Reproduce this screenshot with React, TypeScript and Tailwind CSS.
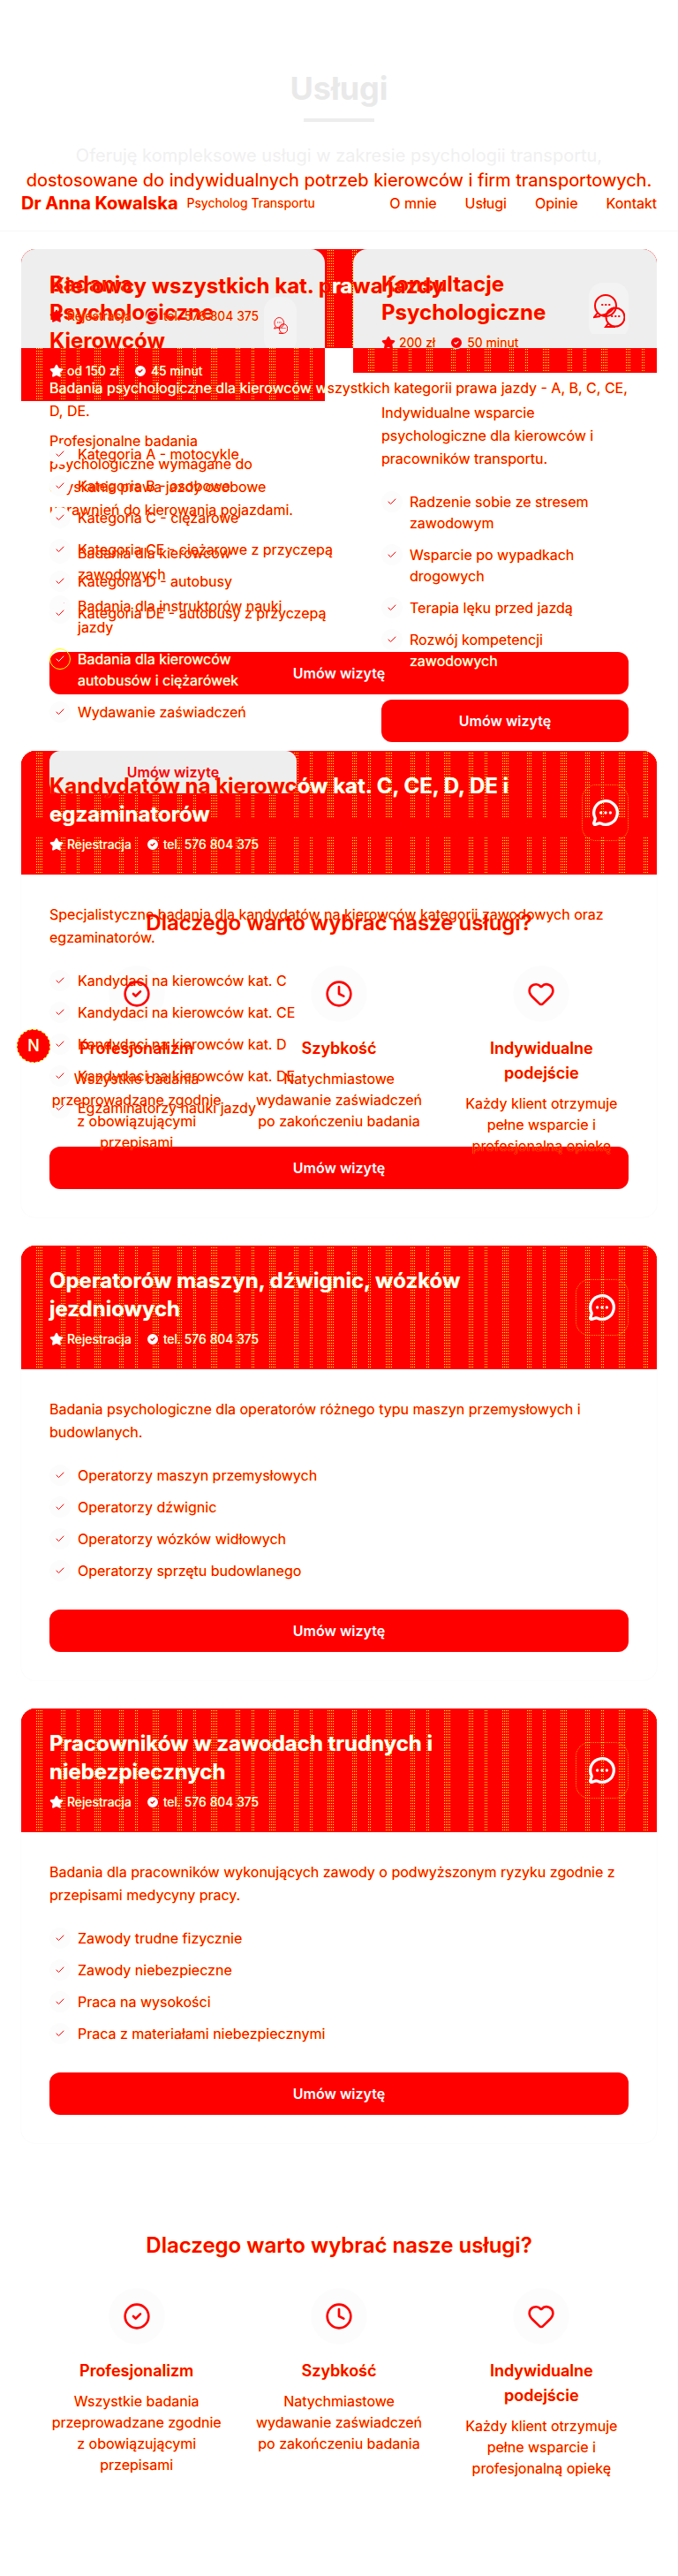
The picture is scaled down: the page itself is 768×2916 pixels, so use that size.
import React from 'react';
import { Check, CircleCheck, Clock, Heart, MessageCircleMore, Star } from 'lucide-react';

// dithered red header texture
const dither =
  'bg-[#ff0000] [background-image:repeating-linear-gradient(90deg,#ff0000_0_16px,transparent_16px_24px,#ff0000_24px_44px,transparent_44px_50px,#ff0000_50px_62px,transparent_62px_66px),repeating-linear-gradient(0deg,#ff0000_0_2px,transparent_2px_3px),repeating-linear-gradient(90deg,#ff0000_0_1px,#ffff00_1px_2px)]';

type Item = { t: React.ReactNode; on?: boolean };

function TwoBubbles({ className }: { className: string }) {
  return (
    <svg viewBox="0 0 36 38" preserveAspectRatio="none" fill="none" stroke="#ff0000" strokeWidth="2" className={className}>
      <circle cx="14" cy="13" r="12" />
      <path d="M5 21L1 26l7-1" />
      <path d="M8 24c6 0 11-3 16-9" />
      <circle cx="25" cy="26" r="10.5" />
      <path d="M17 33l-3 4h11" />
      <path d="M10 12h.5M14 12h.5M18 12h.5M21 25h.5M25 25h.5M29 25h.5" strokeLinecap="round" />
    </svg>
  );
}

function Meta({ a, b, tone }: { a: string; b: string; tone: 'white' | 'red' }) {
  const star = tone === 'white' ? 'w-4 h-4 fill-white text-white' : 'w-4 h-4 fill-[#ff0000] text-[#ff0000]';
  const tick = tone === 'white' ? 'w-4 h-4 fill-white text-[#ff0000]' : 'w-4 h-4 fill-[#ff0000] text-[#eeeeee]';
  return (
    <div className={`flex items-center gap-4 mt-2 h-5 text-sm ${tone === 'white' ? 'text-white' : 'text-[#ff0000]'}`}>
      <span className="flex items-center gap-1">
        <Star className={star} />
        {a}
      </span>
      <span className="flex items-center gap-1">
        <CircleCheck className={tick} />
        {b}
      </span>
    </div>
  );
}

function Bullets({ items }: { items: Item[] }) {
  return (
    <ul className="flex flex-col gap-3 mb-8">
      {items.map((item, i) => (
        <li key={i} className={`flex items-start gap-2 leading-6 ${item.on ? 'text-white' : 'text-[#ff0000]'}`}>
          <span
            className={`w-6 h-6 shrink-0 rounded-full flex items-center justify-center ${
              item.on ? 'border border-[#ffff00]' : 'bg-[#fcfcfc]'
            }`}
          >
            <Check size={12} className={item.on ? 'text-white' : 'text-[#ff0000]'} />
          </span>
          <span>{item.t}</span>
        </li>
      ))}
    </ul>
  );
}

function Button({ grey }: { grey?: boolean }) {
  return (
    <button
      className={`w-full h-12 rounded-xl font-semibold ${grey ? 'bg-[#eeeeee] text-[#ff0000]' : 'bg-[#ff0000] text-white'}`}
    >
      Umów wizytę
    </button>
  );
}

// regular full width card with the red header
function ServiceCard({
  title,
  desc,
  items,
  boxWidth,
  band,
}: {
  title: React.ReactNode;
  desc: string;
  items: Item[];
  boxWidth: string;
  band?: boolean;
}) {
  return (
    <div className="rounded-2xl overflow-hidden bg-white shadow-[0_0_2px_#f4f4f4]">
      <div className={`relative flex items-center justify-between gap-2 px-8 py-6 ${dither}`}>
        {band && <div className="absolute inset-x-0 top-[76px] h-[20px] bg-[#ff0000]" />}
        <div className="relative z-10 flex-1">
          <h3 className="text-2xl leading-8 font-bold text-white">{title}</h3>
          <Meta a="Rejestracja" b="tel. 576 804 375" tone="white" />
        </div>
        <div className={`relative h-16 shrink-0 flex items-center justify-center rounded-2xl border border-dotted border-[#ffff00]/60 ${boxWidth}`}>
          <MessageCircleMore size={32} strokeWidth={2.5} className="text-white" />
        </div>
      </div>
      <div className="p-8">
        <p className="leading-[26px] mb-6 text-[#ff0000]">{desc}</p>
        <Bullets items={items} />
        <Button />
      </div>
    </div>
  );
}

// half width cards lying over the first card
function OverlayCard({
  title,
  meta,
  metaTone,
  desc,
  items,
  icon,
  boxWidth,
  grey,
}: {
  title: React.ReactNode;
  meta: [string, string];
  metaTone: 'white' | 'red';
  desc: string;
  items: Item[];
  icon: React.ReactNode;
  boxWidth: string;
  grey?: boolean;
}) {
  return (
    <div className="min-w-0">
      <div className={`relative flex items-center justify-between gap-2 px-8 py-6 rounded-t-2xl overflow-hidden ${dither}`}>
        <div className="absolute inset-x-0 top-0 h-[112px] bg-[#eeeeee]" />
        <div className="relative flex-1 min-w-0">
          <h3 className="text-2xl leading-8 font-bold text-[#ff0000]">{title}</h3>
          <Meta a={meta[0]} b={meta[1]} tone={metaTone} />
        </div>
        <div className={`relative h-16 shrink-0 flex items-center justify-center rounded-2xl bg-[linear-gradient(#f3f3f3_58px,transparent_58px)] ${boxWidth}`}>
          {icon}
        </div>
      </div>
      <div className="p-8">
        <p className="leading-[26px] mb-6 text-[#ff0000]">{desc}</p>
        <Bullets items={items} />
        <Button grey={grey} />
      </div>
    </div>
  );
}

function WhySection({ className }: { className: string }) {
  const cols = [
    { icon: <CircleCheck size={32} />, title: 'Profesjonalizm', text: 'Wszystkie badania przeprowadzane zgodnie z obowiązującymi przepisami' },
    { icon: <Clock size={32} />, title: 'Szybkość', text: 'Natychmiastowe wydawanie zaświadczeń po zakończeniu badania' },
    { icon: <Heart size={32} />, title: 'Indywidualne podejście', text: 'Każdy klient otrzymuje pełne wsparcie i profesjonalną opiekę' },
  ];
  return (
    <section className={`px-14 text-[#ff0000] text-center ${className}`}>
      <h2 className="text-2xl leading-9 font-semibold mb-[30px]">Dlaczego warto wybrać nasze usługi?</h2>
      <div className="grid grid-cols-3 gap-8">
        {cols.map((c) => (
          <div key={c.title}>
            <div className="w-16 h-16 mx-auto mb-4 rounded-full bg-black/[0.012] flex items-center justify-center">{c.icon}</div>
            <h4 className="text-lg leading-7 font-semibold mb-2">{c.title}</h4>
            <p className="leading-6">{c.text}</p>
          </div>
        ))}
      </div>
    </section>
  );
}

export default function App() {
  return (
    <div className="relative w-[768px] h-[2916px] overflow-hidden bg-white font-['Inter',sans-serif] [text-shadow:0_0_0.8px_#ffff00]">
      {/* Intro */}
      <div className="pt-20 mb-16 text-center">
        <h2 className="text-4xl leading-10 font-bold text-[#e9e9e9] mb-3.5 [text-shadow:none]">Usługi</h2>
        <div className="w-20 h-1 mx-auto mb-6 bg-[#ededed]" />
        <p className="text-xl leading-7 text-[#ff0000]">
          <span className="text-[#f0f0f0] [text-shadow:none]">Oferuję kompleksowe usługi w zakresie psychologii transportu,</span>
          <br />
          dostosowane do indywidualnych potrzeb kierowców i firm transportowych.
        </p>
      </div>

      {/* Header lying over the content */}
      <header className="absolute top-[198px] inset-x-0 h-16 px-6 flex items-center justify-between border-b border-[#f7f7f7] text-[#ff0000]">
        <div className="flex items-center gap-2.5">
          <span className="text-xl font-bold">Dr Anna Kowalska</span>
          <span className="text-sm">Psycholog Transportu</span>
        </div>
        <nav className="flex items-center gap-8">
          <span>O mnie</span>
          <span>Usługi</span>
          <span>Opinie</span>
          <span>Kontakt</span>
        </nav>
      </header>

      <div className="px-6 flex flex-col gap-8">
        {/* First card with the two half width cards on top of it */}
        <div className="relative">
          <div className="rounded-2xl bg-white">
            <div className={`h-[112px] rounded-t-2xl px-8 flex flex-col justify-center ${dither}`}>
              <div className="relative z-10">
                <h3 className="text-2xl leading-8 font-bold text-[#ff0000] whitespace-nowrap">
                  Kierowcy wszystkich kat. p<span className="text-white">ra</span>wa jazdy
                </h3>
                <Meta a="Rejestracja" b="tel. 576 804 375" tone="red" />
              </div>
            </div>
            <div className="relative z-10 px-8 pt-8">
              <p className="leading-[26px] mb-6 text-[#ff0000]">
                <span className="text-white">Badania psychologiczne dla kierowców w</span>szystkich kategorii prawa jazdy - A, B, C, CE, D, DE.
              </p>
              <Bullets
                items={[
                  { t: 'Kategoria A - motocykle' },
                  { t: 'Kategoria B - osobowe' },
                  { t: 'Kategoria C - ciężarowe' },
                  { t: 'Kategoria CE - ciężarowe z przyczepą' },
                  { t: 'Kategoria D - autobusy' },
                  { t: 'Kategoria DE - autobusy z przyczepą' },
                ]}
              />
            </div>
            <div className="px-8 pb-8">
              <Button />
            </div>
          </div>
          <div className="absolute inset-x-0 top-0 z-[5] grid grid-cols-2 gap-8">
            <OverlayCard
              title={
                <>
                  Badania
                  <br />
                  Psychologiczne
                  <br />
                  Kierowców
                </>
              }
              meta={['od 150 zł', '45 minut']}
              metaTone="white"
              desc="Profesjonalne badania psychologiczne wymagane do uzyskania prawa jazdy osobowe uprawnień do kierowania pojazdami."
              items={[
                { t: 'Badania dla kierowców zawodowych' },
                { t: 'Badania dla instruktorów nauki jazdy' },
                { t: 'Badania dla kierowców autobusów i ciężarówek', on: true },
                { t: 'Wydawanie zaświadczeń' },
              ]}
              icon={<TwoBubbles className="w-4 h-[19px]" />}
              boxWidth="w-[37px]"
              grey
            />
            <OverlayCard
              title={
                <>
                  Konsultacje
                  <br />
                  Psychologiczne
                </>
              }
              meta={['200 zł', '50 minut']}
              metaTone="red"
              desc="Indywidualne wsparcie psychologiczne dla kierowców i pracowników transportu."
              items={[
                { t: 'Radzenie sobie ze stresem zawodowym' },
                { t: 'Wsparcie po wypadkach drogowych' },
                { t: 'Terapia lęku przed jazdą' },
                {
                  t: (
                    <>
                      Rozwój kompetencji <span className="text-white">zawodowych</span>
                    </>
                  ),
                },
              ]}
              icon={<TwoBubbles className="w-9 h-[38px]" />}
              boxWidth="w-[45px]"
            />
          </div>
        </div>

        <ServiceCard
          band
          title={
            <>
              <span className="text-[#ff0000]">Kandydatów na kierowc</span>ów kat. C, CE, D, DE i egzaminatorów
            </>
          }
          desc="Specjalistyczne badania dla kandydatów na kierowców kategorii zawodowych oraz egzaminatorów."
          items={[
            { t: 'Kandydaci na kierowców kat. C' },
            { t: 'Kandydaci na kierowców kat. CE' },
            { t: 'Kandydaci na kierowców kat. D' },
            { t: 'Kandydaci na kierowców kat. DE' },
            { t: 'Egzaminatorzy nauki jazdy' },
          ]}
          boxWidth="w-[53px]"
        />
        <ServiceCard
          title="Operatorów maszyn, dźwignic, wózków jezdniowych"
          desc="Badania psychologiczne dla operatorów różnego typu maszyn przemysłowych i budowlanych."
          items={[
            { t: 'Operatorzy maszyn przemysłowych' },
            { t: 'Operatorzy dźwignic' },
            { t: 'Operatorzy wózków widłowych' },
            { t: 'Operatorzy sprzętu budowlanego' },
          ]}
          boxWidth="w-[60px]"
        />
        <ServiceCard
          title="Pracowników w zawodach trudnych i niebezpiecznych"
          desc="Badania dla pracowników wykonujących zawody o podwyższonym ryzyku zgodnie z przepisami medycyny pracy."
          items={[
            { t: 'Zawody trudne fizycznie' },
            { t: 'Zawody niebezpieczne' },
            { t: 'Praca na wysokości' },
            { t: 'Praca z materiałami niebezpiecznymi' },
          ]}
          boxWidth="w-[60px]"
        />
      </div>

      <WhySection className="mt-[98px]" />

      {/* Second copy of the section lying over the third card */}
      <WhySection className="absolute inset-x-0 top-[1027px]" />

      {/* Dev indicator */}
      <div className="absolute left-[19px] top-[1165px] z-20 w-[38px] h-[38px] rounded-full bg-[#ff0000] border border-dashed border-[#ffff00] text-white flex items-center justify-center text-lg">
        N
      </div>
    </div>
  );
}
